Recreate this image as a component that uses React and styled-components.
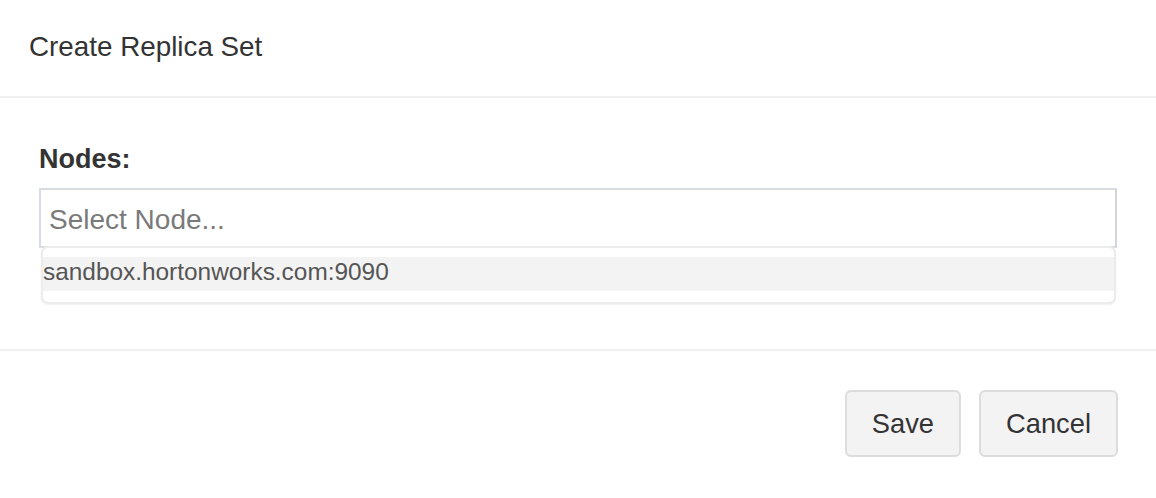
import styled, { createGlobalStyle } from "styled-components";

const GlobalStyle = createGlobalStyle`
  html, body {
    margin: 0;
    padding: 0;
    background: #fff;
  }
  body {
    font-family: "Liberation Sans", Arial, Helvetica, sans-serif;
    color: #333;
  }
  * {
    box-sizing: border-box;
  }
`;

const Modal = styled.div`
  width: 1156px;
  background: #fff;
`;

const Header = styled.div`
  height: 98px;
  display: flex;
  align-items: center;
  padding: 0 29px 2px;
  border-bottom: 2px solid #efefef;
`;

const Title = styled.h4`
  margin: 0;
  font-size: 27.8px;
  font-weight: normal;
  line-height: 28px;
  color: #333;
`;

const Body = styled.div`
  padding: 46px 39px 101px;
`;

const Label = styled.label`
  display: block;
  font-size: 27px;
  font-weight: bold;
  line-height: 30px;
  margin-bottom: 14px;
  color: #333;
`;

const SelectWrap = styled.div`
  position: relative;
`;

const Control = styled.div`
  height: 60px;
  border: 2px solid #d8dbe0;
  border-right-color: #d2d6dc;
  display: flex;
  align-items: center;
  padding: 4px 8px 0;
  font-size: 28px;
  color: #7a7a7a;
`;

const Menu = styled.div`
  position: absolute;
  top: 58px;
  left: 2px;
  right: 1px;
  background: #fff;
  border: 2px solid #ececec;
  border-radius: 7px;
  box-shadow: 0 1px 2px rgba(0, 0, 0, 0.06);
  padding: 9px 0 11px;
`;

const Option = styled.div`
  height: 34px;
  padding: 0 0 4px;
  line-height: 30px;
  font-size: 24.4px;
  color: #555;
  background: ${(props) => (props.active ? "#f3f3f3" : "#fff")};
`;

const Footer = styled.div`
  border-top: 2px solid #f0f0f0;
  padding: 39px 38px 39px 39px;
  display: flex;
  justify-content: flex-end;
  gap: 18px;
`;

const Button = styled.button`
  height: 67px;
  padding: 0 25px;
  font-family: inherit;
  font-size: 27.3px;
  color: #333;
  background: #f3f3f3;
  border: 2px solid #dcdcdc;
  border-radius: 6px;
`;

const App = () => {
  return (
    <>
      <GlobalStyle />
      <Modal>
        <Header>
          <Title>Create Replica Set</Title>
        </Header>
        <Body>
          <Label>Nodes:</Label>
          <SelectWrap>
            <Control>Select Node...</Control>
            <Menu>
              <Option active>sandbox.hortonworks.com:9090</Option>
            </Menu>
          </SelectWrap>
        </Body>
        <Footer>
          <Button>Save</Button>
          <Button>Cancel</Button>
        </Footer>
      </Modal>
    </>
  );
};

export default App;
